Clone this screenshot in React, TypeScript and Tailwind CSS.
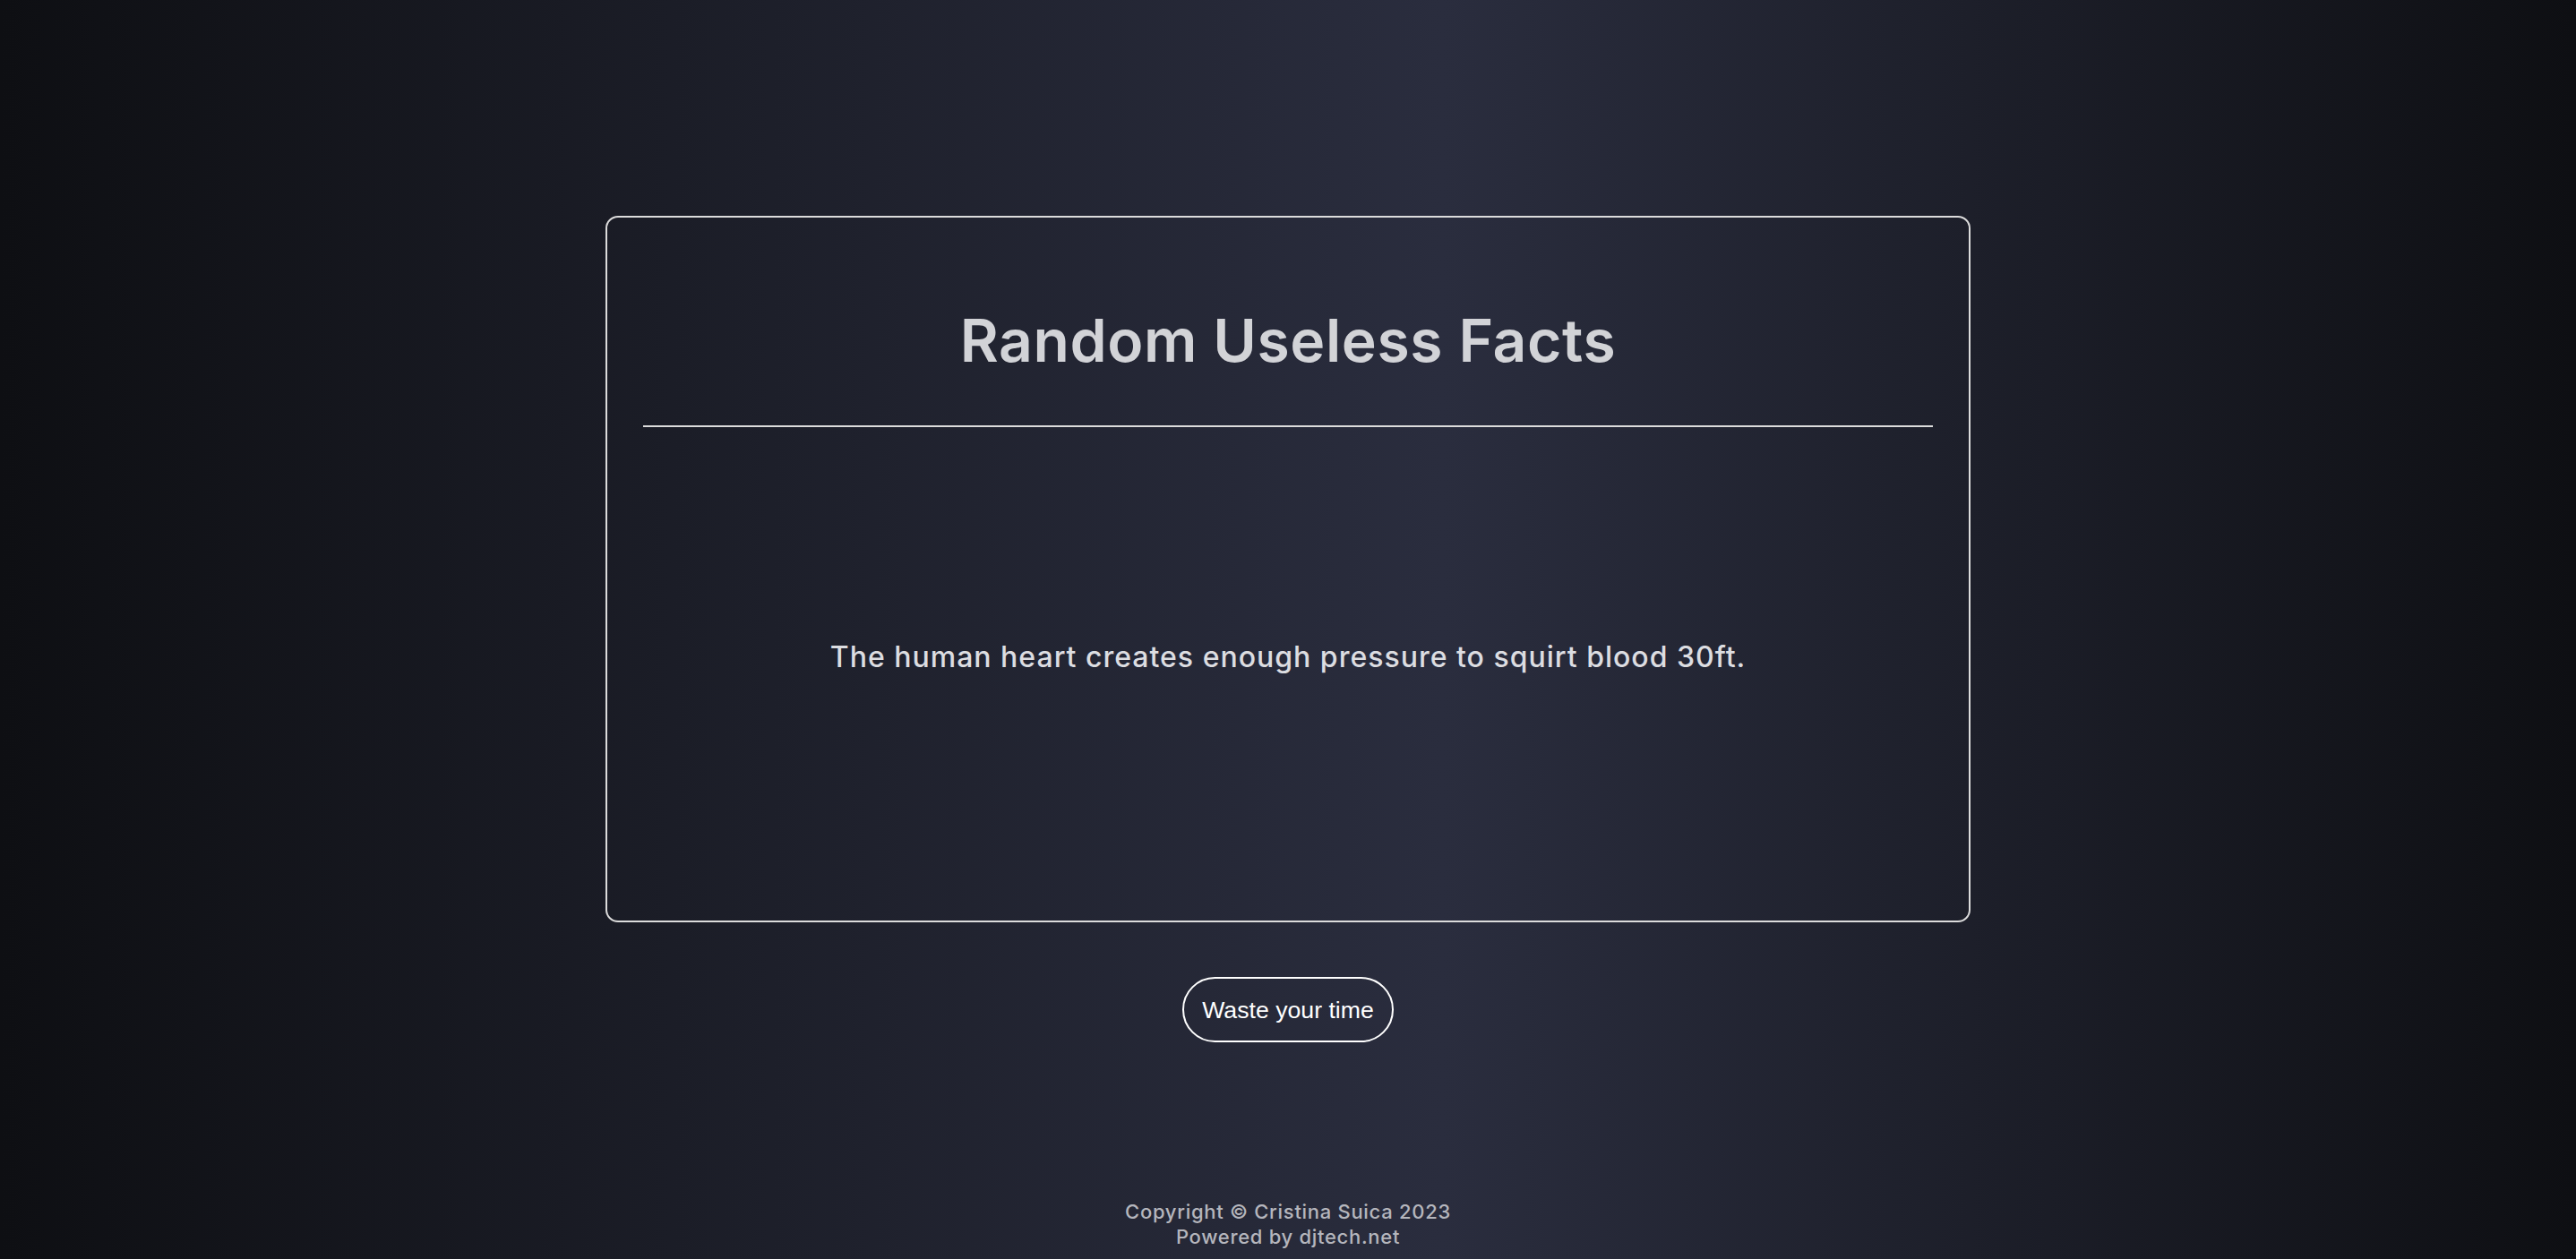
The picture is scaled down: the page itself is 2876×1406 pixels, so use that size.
import React from "react";

export default function App() {
  return (
    <div className="h-screen w-full flex flex-col items-center bg-[linear-gradient(90deg,#0e0f13_0%,#2a2d3e_56%,#0e0f13_100%)] font-['Inter',sans-serif] overflow-hidden">
      <div className="mt-[241px] w-[1524px] h-[789px] border-2 border-[#dcdcdc] rounded-[14px] px-[40px] flex flex-col">
        <h1 className="pt-[104px] text-center text-[66px] leading-[66px] font-semibold text-[#d2d3d7] tracking-[0.6px]">
          Random Useless Facts
        </h1>
        <div className="mt-[62px] h-[2px] bg-[#dcdcdc]" />
        <div className="flex-1 flex items-center justify-center pb-[38px]">
          <p className="text-[32px] font-medium text-[#dcdde1] tracking-[1px]">
            The human heart creates enough pressure to squirt blood 30ft.
          </p>
        </div>
      </div>
      <button className="mt-[61px] h-[73px] px-[20px] rounded-full border-2 border-white text-white text-[26.67px] font-['Liberation_Sans',Arial,sans-serif] bg-transparent">
        Waste your time
      </button>
      <footer className="mt-auto pb-[11px] flex flex-col items-center text-[#b5b6bd] text-[22px] leading-[28px] font-medium tracking-[0.7px]">
        <span>Copyright © Cristina Suica 2023</span>
        <span>Powered by djtech.net</span>
      </footer>
    </div>
  );
}
